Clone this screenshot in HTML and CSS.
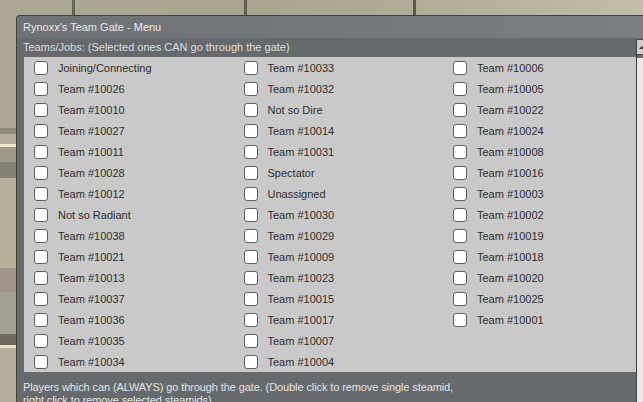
FILE: index.html
```html
<!DOCTYPE html>
<html>
<head>
<meta charset="utf-8">
<title>Rynoxx's Team Gate - Menu</title>
<link rel="stylesheet" href="styles.css">
</head>
<body>
<div class="scene">
  <div class="window">
    <div class="titlebar">Rynoxx's Team Gate - Menu</div>
    <div class="content">
      <div class="main">
        <div class="label">Teams/Jobs: (Selected ones CAN go through the gate)</div>
        <div class="panel">
          <label class="item"><span class="cb"></span><span>Joining/Connecting</span></label>
          <label class="item"><span class="cb"></span><span>Team #10026</span></label>
          <label class="item"><span class="cb"></span><span>Team #10010</span></label>
          <label class="item"><span class="cb"></span><span>Team #10027</span></label>
          <label class="item"><span class="cb"></span><span>Team #10011</span></label>
          <label class="item"><span class="cb"></span><span>Team #10028</span></label>
          <label class="item"><span class="cb"></span><span>Team #10012</span></label>
          <label class="item"><span class="cb"></span><span>Not so Radiant</span></label>
          <label class="item"><span class="cb"></span><span>Team #10038</span></label>
          <label class="item"><span class="cb"></span><span>Team #10021</span></label>
          <label class="item"><span class="cb"></span><span>Team #10013</span></label>
          <label class="item"><span class="cb"></span><span>Team #10037</span></label>
          <label class="item"><span class="cb"></span><span>Team #10036</span></label>
          <label class="item"><span class="cb"></span><span>Team #10035</span></label>
          <label class="item"><span class="cb"></span><span>Team #10034</span></label>

          <label class="item"><span class="cb"></span><span>Team #10033</span></label>
          <label class="item"><span class="cb"></span><span>Team #10032</span></label>
          <label class="item"><span class="cb"></span><span>Not so Dire</span></label>
          <label class="item"><span class="cb"></span><span>Team #10014</span></label>
          <label class="item"><span class="cb"></span><span>Team #10031</span></label>
          <label class="item"><span class="cb"></span><span>Spectator</span></label>
          <label class="item"><span class="cb"></span><span>Unassigned</span></label>
          <label class="item"><span class="cb"></span><span>Team #10030</span></label>
          <label class="item"><span class="cb"></span><span>Team #10029</span></label>
          <label class="item"><span class="cb"></span><span>Team #10009</span></label>
          <label class="item"><span class="cb"></span><span>Team #10023</span></label>
          <label class="item"><span class="cb"></span><span>Team #10015</span></label>
          <label class="item"><span class="cb"></span><span>Team #10017</span></label>
          <label class="item"><span class="cb"></span><span>Team #10007</span></label>
          <label class="item"><span class="cb"></span><span>Team #10004</span></label>

          <label class="item"><span class="cb"></span><span>Team #10006</span></label>
          <label class="item"><span class="cb"></span><span>Team #10005</span></label>
          <label class="item"><span class="cb"></span><span>Team #10022</span></label>
          <label class="item"><span class="cb"></span><span>Team #10024</span></label>
          <label class="item"><span class="cb"></span><span>Team #10008</span></label>
          <label class="item"><span class="cb"></span><span>Team #10016</span></label>
          <label class="item"><span class="cb"></span><span>Team #10003</span></label>
          <label class="item"><span class="cb"></span><span>Team #10002</span></label>
          <label class="item"><span class="cb"></span><span>Team #10019</span></label>
          <label class="item"><span class="cb"></span><span>Team #10018</span></label>
          <label class="item"><span class="cb"></span><span>Team #10020</span></label>
          <label class="item"><span class="cb"></span><span>Team #10025</span></label>
          <label class="item"><span class="cb"></span><span>Team #10001</span></label>
        </div>
        <div class="footer">
          <span class="line">Players which can (ALWAYS) go through the gate. (Double click to remove single steamid,</span>
          <span class="line">right click to remove selected steamids)</span>
        </div>
      </div>
      <div class="scrollbar">
        <div class="scroll-up"><span class="arrow"></span></div>
        <div class="scroll-track"></div>
      </div>
    </div>
  </div>
</div>
</body>
</html>
```

FILE: styles.css
```css
html, body {
  margin: 0;
  padding: 0;
  width: 643px;
  height: 402px;
  overflow: hidden;
}

body {
  font-family: "Liberation Sans", Arial, sans-serif;
  font-size: 11px;
  background-color: #aaa592;
  background-image:
    linear-gradient(to bottom,
      transparent 0, transparent 128px,
      #8f8b7c 128px, #8f8b7c 134px,
      #b2ad9a 134px, #b2ad9a 144px,
      #ece7cc 144px, #ece7cc 147px,
      #9e9a89 147px, #9e9a89 162px,
      #858172 162px, #858172 178px,
      #b5b09c 178px, #b5b09c 268px,
      #a0958c 268px, #a0958c 292px,
      #a5a192 292px, #a5a192 334px,
      #6d6a60 334px, #6d6a60 345px,
      #e6e1c6 345px, #e6e1c6 348px,
      #b3ae9b 348px, #b3ae9b 402px),
    linear-gradient(to right,
      transparent 0, transparent 72px,
      #67645a 72px, #67645a 75px,
      transparent 75px, transparent 244px,
      #635f56 244px, #635f56 247px,
      transparent 247px, transparent 413px,
      #5c5950 413px, #5c5950 416px,
      transparent 416px),
    linear-gradient(to right, #aca794 0, #a9a490 40%, #b3ae9a 70%, #c2bda7 100%);
}

.scene {
  padding: 15px 0 0 16px;
}

.window {
  width: 700px;
  height: 420px;
  background: #676a6c;
  border: 1px solid #3e4143;
  border-right: none;
  border-bottom: none;
  border-radius: 4px 0 0 0;
  display: flex;
  flex-direction: column;
}

.titlebar {
  height: 22px;
  line-height: 22px;
  padding-left: 6px;
  color: #e9eaea;
  background: linear-gradient(to right, #6e7275, #767a7d 60%, #7b8083);
  border-radius: 3px 0 0 0;
  white-space: nowrap;
}

.content {
  display: flex;
  flex: 1;
}

.main {
  width: 619px;
  flex: none;
  display: flex;
  flex-direction: column;
}

.label {
  height: 19px;
  line-height: 19px;
  padding-left: 6px;
  color: #dcdedf;
  white-space: nowrap;
}

.panel {
  margin-left: 7px;
  width: 612px;
  height: 315px;
  background: #c9c9c9;
  box-sizing: border-box;
  padding-left: 10px;
  display: grid;
  grid-auto-flow: column;
  grid-template-rows: repeat(15, 21px);
  grid-template-columns: repeat(3, 209.5px);
}

.item {
  display: flex;
  align-items: center;
  color: #2e2e2e;
  white-space: nowrap;
}

.cb {
  width: 12px;
  height: 12px;
  flex: none;
  background: #ffffff;
  border: 1px solid #5e5e5e;
  border-radius: 3px;
  margin-right: 10px;
}

.footer {
  padding: 9px 0 0 6px;
  line-height: 13px;
  color: #e2e4e4;
  letter-spacing: -0.1px;
}

.footer .line {
  display: block;
  white-space: nowrap;
}

.scrollbar {
  margin-top: 1px;
  width: 20px;
  flex: none;
  border-left: 1px solid #3b3e40;
  display: flex;
  flex-direction: column;
}

.scroll-up {
  height: 14px;
  background: #cfcfcf;
  border-top: 1px solid #4a4d4f;
  border-bottom: 1px solid #4a4d4f;
  display: flex;
  align-items: center;
  padding-left: 2px;
}

.arrow {
  width: 0;
  height: 0;
  border-left: 3px solid transparent;
  border-right: 3px solid transparent;
  border-bottom: 3px solid #3a3a3a;
}

.scroll-track {
  flex: 1;
  margin-top: 3px;
  background: #e9e9e9;
}
```
